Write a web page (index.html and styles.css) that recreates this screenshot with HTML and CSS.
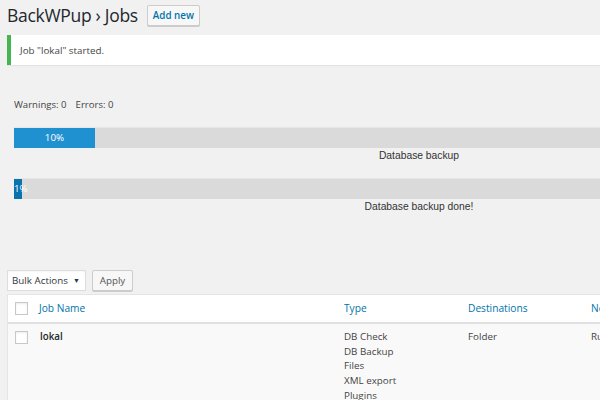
FILE: index.html
```html
<!DOCTYPE html>
<html>
<head>
<meta charset="utf-8">
<link rel="stylesheet" href="styles.css">
</head>
<body>
<div class="wrap">
  <div class="head">
    <h1 class="title">BackWPup › Jobs</h1>
    <span class="btn-add">Add new</span>
  </div>
  <div class="notice">Job "lokal" started.</div>
  <div class="progress-area">
    <div class="counts"><span>Warnings: 0</span><span>Errors: 0</span></div>
    <div class="bar"><div class="fill fill-a" style="width:81px">10%</div></div>
    <div class="bar-label">Database backup</div>
    <div class="bar bar-2"><div class="fill fill-b" style="width:8px"><span class="fill-text">1%</span></div></div>
    <div class="bar-label">Database backup done!</div>
  </div>
  <div class="actions">
    <div class="select">Bulk Actions <span class="caret">▼</span></div>
    <div class="btn-apply">Apply</div>
  </div>
  <div class="table">
    <div class="row row-head">
      <div class="cell cell-cb"><span class="cb"></span></div>
      <div class="cell cell-name link">Job Name</div>
      <div class="cell cell-type link">Type</div>
      <div class="cell cell-dest link">Destinations</div>
      <div class="cell cell-next link">Next Run</div>
    </div>
    <div class="row row-body">
      <div class="cell cell-cb"><span class="cb"></span></div>
      <div class="cell cell-name job">lokal</div>
      <div class="cell cell-type">
        <div>DB Check</div>
        <div>DB Backup</div>
        <div>Files</div>
        <div>XML export</div>
        <div>Plugins</div>
      </div>
      <div class="cell cell-dest">Folder</div>
      <div class="cell cell-next">Running</div>
    </div>
  </div>
</div>
</body>
</html>
```

FILE: styles.css
```css
html, body {
  margin: 0;
  padding: 0;
  background: #f1f1f1;
  overflow: hidden;
  width: 600px;
  height: 400px;
}
body {
  font-family: "Open Sans", "Noto Sans", sans-serif;
  color: #444;
  font-size: 10px;
}
.wrap {
  padding-left: 7px;
  width: 900px;
}
.head {
  display: flex;
  align-items: center;
  height: 30px;
}
.title {
  margin: 0;
  font-weight: 400;
  font-size: 17.5px;
  color: #23282d;
  letter-spacing: -0.3px;
  line-height: 24px;
}
.btn-add {
  margin-left: 9px;
  height: 19px;
  line-height: 19px;
  padding: 0 5px;
  border: 1px solid #ccc;
  border-radius: 2px;
  background: #f7f7f7;
  color: #0073aa;
  font-size: 9.8px;
  font-weight: 600;
  box-shadow: 0 1px 0 #ccc;
}
.notice {
  margin-top: 5px;
  height: 30px;
  line-height: 31px;
  background: #fff;
  border-left: 4px solid #46b450;
  padding-left: 9px;
  box-shadow: 0 1px 1px rgba(0,0,0,.06);
  font-size: 9.8px;
  color: #444;
}
.progress-area {
  padding-left: 7px;
  width: 810px;
}
.counts {
  margin-top: 33px;
  line-height: 14px;
  display: flex;
  gap: 9px;
  font-size: 9.6px;
}
.bar {
  margin-top: 15px;
  height: 21px;
  background: #dadada;
  border-top: 1px solid #e6e6e6;
  box-sizing: border-box;
  position: relative;
}
.bar-2 {
  margin-top: 15px;
}
.fill {
  height: 20px;
  line-height: 20px;
  color: #fff;
  text-align: center;
  font-size: 9.8px;
  white-space: nowrap;
}
.fill-a {
  background: #2091d0;
}
.fill-b {
  background: #0a72ad;
  text-align: left;
}
.fill-text {
  position: absolute;
  left: 0;
  top: 0;
  line-height: 20px;
  color: #fff;
}
.bar-label {
  text-align: center;
  line-height: 15px;
  font-family: "Liberation Sans", Arial, sans-serif;
  font-size: 10.3px;
  color: #333;
}
.actions {
  margin-top: 56px;
  display: flex;
  gap: 6px;
  height: 21px;
}
.select {
  width: 79px;
  box-sizing: border-box;
  height: 21px;
  line-height: 19px;
  border: 1px solid #ddd;
  background: #fff;
  padding-left: 4px;
  padding-right: 5px;
  font-size: 9.8px;
  color: #32373c;
  box-shadow: inset 0 1px 2px rgba(0,0,0,.04);
  display: flex;
  justify-content: space-between;
}
.caret {
  font-size: 7px;
}
.btn-apply {
  width: 41px;
  box-sizing: border-box;
  height: 21px;
  line-height: 19px;
  text-align: center;
  border: 1px solid #ccc;
  border-radius: 2px;
  background: #f7f7f7;
  box-shadow: 0 1px 0 #ccc;
  font-size: 9.8px;
  color: #555;
}
.table {
  margin-top: 3px;
  border: 1px solid #e5e5e5;
  border-right: none;
  box-shadow: 0 1px 1px rgba(0,0,0,.04);
}
.row {
  display: grid;
  grid-template-columns: 31px 305px 123px 124px 200px;
}
.row-head {
  background: #fff;
  height: 27px;
  border-bottom: 2px solid #e1e1e1;
  align-items: center;
}
.row-body {
  background: #f9f9f9;
  padding-top: 6px;
  height: 80px;
}
.cell {
  font-size: 9.8px;
  line-height: 14.7px;
}
.cell-cb {
  padding-left: 7px;
  display: flex;
  align-items: center;
}
.row-body .cell-cb {
  align-items: flex-start;
  padding-top: 1px;
}
.cb {
  display: block;
  width: 11px;
  height: 11px;
  border: 1px solid #c6c9cc;
  background: #fff;
  box-shadow: inset 0 1px 2px rgba(0,0,0,.08);
}
.link {
  color: #0073aa;
  font-size: 10.2px;
}
.job {
  font-weight: 600;
  color: #23282d;
  padding-left: 1px;
}
.cell-dest {
  padding-left: 1px;
}
```
